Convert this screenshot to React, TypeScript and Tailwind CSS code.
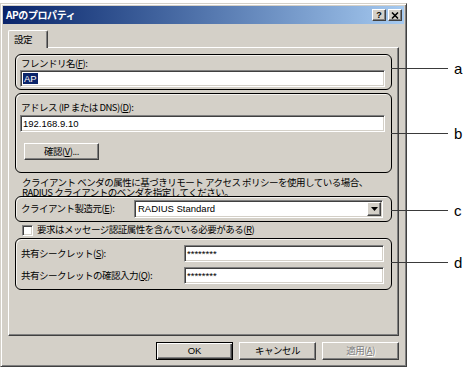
import React from 'react';

const jp = "font-['Noto_Sans_CJK_JP',sans-serif] text-[9.5px] tracking-[-0.5px]";
const latin = "font-['Liberation_Sans',Arial,sans-serif] text-[9.5px]";
const sunken =
    'bg-white border border-t-[#808080] border-l-[#808080] border-r-white border-b-white shadow-[inset_1px_1px_0_#404040,inset_-1px_-1px_0_#d4d0c8]';
const raised =
    'bg-[#d4d0c8] border border-t-white border-l-white border-r-[#404040] border-b-[#404040] shadow-[inset_-1px_-1px_0_#808080]';
const group = 'relative rounded-[6px] border border-black bg-[#d4d0c8] shadow-[inset_1px_1px_0_#f4f2ee]';

const U: React.FC<{ c: string }> = ({ c }) => (
    <span className="underline underline-offset-[1px]">{c}</span>
);

// annotation letter outside the dialog
const Callout: React.FC<{ pos: string; letter: string }> = ({ pos, letter }) => (
    <div className={`absolute left-full ${pos} h-0 flex items-center`}>
        <div className="w-[57px] h-px bg-[#3a3a3a]" />
        <span className="ml-[6px] font-['Liberation_Sans',Arial,sans-serif] text-[15px] leading-none text-black">
            {letter}
        </span>
    </div>
);

const App: React.FC = () => {
    return (
        <div className="w-[466px] h-[374px] bg-white pt-[3px] text-black">
            <div className="w-[407px] h-[364px] flex flex-col bg-[#d4d0c8] border border-t-[#d4d0c8] border-l-[#d4d0c8] border-r-[#404040] border-b-[#404040] shadow-[inset_1px_1px_0_#fff,inset_-1px_-1px_0_#808080] p-[2px]">
                {/* title bar */}
                <div className="h-[18px] flex items-center bg-linear-to-r from-[#0a246a] to-[#a6caf0] pl-[3px] pr-[2px]">
                    <span className="font-['Noto_Sans_CJK_JP',sans-serif] text-[10px] font-bold tracking-[-0.4px] text-white leading-none">
                        APのプロパティ
                    </span>
                    <div className="ml-auto flex gap-[2px]">
                        <div className={`${raised} w-[14px] h-[12px] flex items-center justify-center`}>
                            <span className="font-['Liberation_Sans',Arial,sans-serif] text-[9px] font-bold leading-none">
                                ?
                            </span>
                        </div>
                        <div className={`${raised} w-[14px] h-[12px] flex items-center justify-center`}>
                            <svg width="8" height="7" viewBox="0 0 8 7">
                                <path d="M1 0.5 L7 6.5 M7 0.5 L1 6.5" stroke="#000" strokeWidth="1.5" />
                            </svg>
                        </div>
                    </div>
                </div>

                {/* tabs */}
                <div className="mt-[6px] mx-[5px] flex flex-col">
                    <div className="flex">
                        <div className="relative z-10 -mb-px w-[40px] h-[18px] bg-[#d4d0c8] border-l border-t border-white border-r border-r-[#404040] shadow-[inset_-1px_0_0_#808080] rounded-t-[2px] pl-[5px] flex items-center">
                            <span className={jp}>設定</span>
                        </div>
                    </div>
                    <div className="h-[289px] border border-t-white border-l-white border-r-[#404040] border-b-[#404040] shadow-[inset_-1px_-1px_0_#808080] px-[6px] pt-[6px] flex flex-col">
                        {/* a */}
                        <div className={`${group} h-[36px] pl-[4px] pr-[6px] pt-[2px]`}>
                            <div className={`${jp} ml-[1px] h-[12px] leading-[12px]`}>
                                フレンドリ名(<U c="F" />):
                            </div>
                            <div className={`${sunken} mt-[1px] h-[17px] flex items-center pl-[2px]`}>
                                <span className={`${latin} bg-[#0a246a] text-white leading-[11px] px-px`}>AP</span>
                            </div>
                            <Callout pos="top-[13px]" letter="a" />
                        </div>

                        {/* b */}
                        <div className={`${group} mt-[3px] h-[80px] pl-[4px] pr-[6px] pt-[7px]`}>
                            <div className={`${jp} ml-[1px] h-[12px] leading-[12px]`}>
                                アドレス (IP または DNS)(<U c="D" />):
                            </div>
                            <div className={`${sunken} mt-[2px] h-[17px] flex items-center pl-[2px]`}>
                                <span className={`${latin} leading-none`}>192.168.9.10</span>
                            </div>
                            <div className={`${raised} mt-[11px] ml-[4px] w-[75px] h-[17px] flex items-center justify-center`}>
                                <span className={`${jp} leading-none`}>
                                    確認(<U c="V" />)...
                                </span>
                            </div>
                            <Callout pos="top-[39px]" letter="b" />
                        </div>

                        {/* description, second line partly hidden under group c */}
                        <div className={`${jp} mt-[4px] h-[19px] pl-[7px] leading-[10px]`}>
                            <div className="whitespace-nowrap">
                                クライアント ベンダの属性に基づきリモート アクセス ポリシーを使用している場合、
                            </div>
                            <div className="whitespace-nowrap">RADIUS クライアントのベンダを指定してください。</div>
                        </div>

                        {/* c */}
                        <div className={`${group} z-10 h-[26px] pl-[4px] pr-[8px] flex items-center`}>
                            <div className={`${jp} ml-[1px] w-[113px] leading-none`}>
                                クライアント製造元(<U c="E" />):
                            </div>
                            <div className={`${sunken} flex-1 h-[18px] flex items-center pl-[3px] pr-px`}>
                                <span className={`${latin} leading-none`}>RADIUS Standard</span>
                                <div className={`${raised} ml-auto w-[14px] h-[14px] flex items-center justify-center`}>
                                    <svg width="7" height="4" viewBox="0 0 7 4">
                                        <path d="M0 0 H7 L3.5 4 Z" fill="#000" />
                                    </svg>
                                </div>
                            </div>
                            <Callout pos="top-[13px]" letter="c" />
                        </div>

                        {/* checkbox */}
                        <div className="h-[16px] flex items-center pl-[7px]">
                            <div className={`${sunken} w-[11px] h-[11px]`} />
                            <span className={`${jp} ml-[4px] leading-none whitespace-nowrap`}>
                                要求はメッセージ認証属性を含んでいる必要がある(<U c="R" />)
                            </span>
                        </div>

                        {/* d */}
                        <div className={`${group} h-[52px] pl-[4px] pr-[5px] pt-[6px] flex flex-col gap-[5px]`}>
                            <div className="flex items-center">
                                <div className={`${jp} ml-[1px] w-[163px] leading-none`}>
                                    共有シークレット(<U c="S" />):
                                </div>
                                <div className={`${sunken} w-[200px] h-[17px] flex items-center pl-[2px]`}>
                                    <span className={`${latin} leading-none`}>********</span>
                                </div>
                            </div>
                            <div className="flex items-center">
                                <div className={`${jp} ml-[1px] w-[163px] leading-none`}>
                                    共有シークレットの確認入力(<U c="Q" />):
                                </div>
                                <div className={`${sunken} w-[200px] h-[17px] flex items-center pl-[2px]`}>
                                    <span className={`${latin} leading-none`}>********</span>
                                </div>
                            </div>
                            <Callout pos="top-[23px]" letter="d" />
                        </div>
                    </div>
                </div>

                {/* buttons */}
                <div className="mt-[6px] pr-[5px] flex justify-end gap-[6px]">
                    <div className="w-[77px] h-[18px] border border-black bg-[#d4d0c8] shadow-[inset_1px_1px_0_#fff,inset_-1px_-1px_0_#404040,inset_-2px_-2px_0_#808080] flex items-center justify-center">
                        <span className={`${latin} leading-none`}>OK</span>
                    </div>
                    <div className={`${raised} w-[77px] h-[18px] flex items-center justify-center`}>
                        <span className={`${jp} leading-none`}>キャンセル</span>
                    </div>
                    <div className={`${raised} w-[77px] h-[18px] flex items-center justify-center`}>
                        <span className={`${jp} leading-none text-[#808080] [text-shadow:1px_1px_0_#fff]`}>
                            適用(<U c="A" />)
                        </span>
                    </div>
                </div>
            </div>
        </div>
    );
};

export default App;
